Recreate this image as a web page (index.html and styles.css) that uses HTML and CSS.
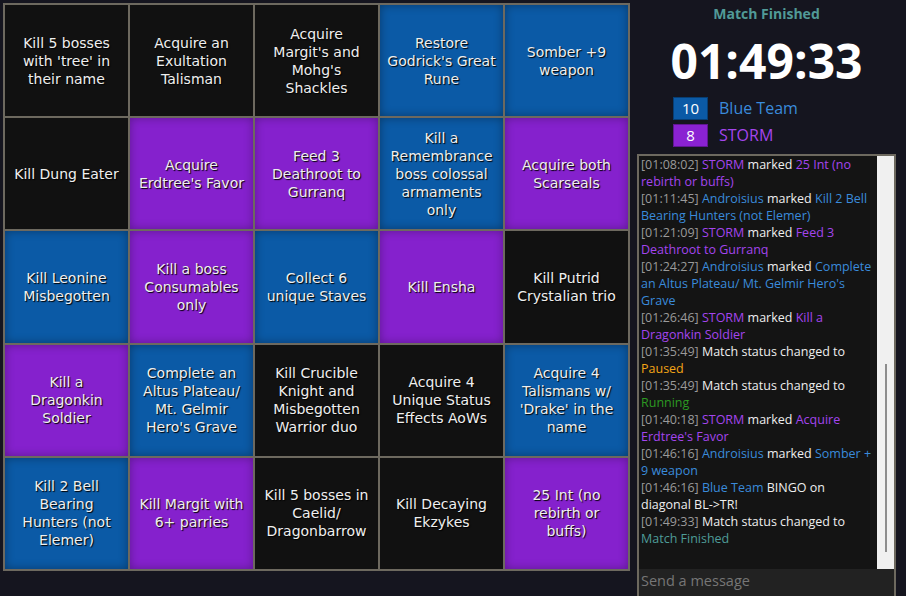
FILE: index.html
```html
<!DOCTYPE html>
<html>
<head>
<meta charset="utf-8">
<link rel="stylesheet" href="styles.css">
</head>
<body>
<div class="app">
  <div class="board">
    <div class="cell c-none">Kill 5 bosses<br>with 'tree' in<br>their name</div>
    <div class="cell c-none">Acquire an<br>Exultation<br>Talisman</div>
    <div class="cell c-none">Acquire<br>Margit's and<br>Mohg's<br>Shackles</div>
    <div class="cell c-blue">Restore<br>Godrick's Great<br>Rune</div>
    <div class="cell c-blue">Somber +9<br>weapon</div>

    <div class="cell c-none">Kill Dung Eater</div>
    <div class="cell c-purple">Acquire<br>Erdtree's Favor</div>
    <div class="cell c-purple">Feed 3<br>Deathroot to<br>Gurranq</div>
    <div class="cell c-blue">Kill a<br>Remembrance<br>boss colossal<br>armaments<br>only</div>
    <div class="cell c-purple">Acquire both<br>Scarseals</div>

    <div class="cell c-blue">Kill Leonine<br>Misbegotten</div>
    <div class="cell c-purple">Kill a boss<br>Consumables<br>only</div>
    <div class="cell c-blue">Collect 6<br>unique Staves</div>
    <div class="cell c-purple">Kill Ensha</div>
    <div class="cell c-none">Kill Putrid<br>Crystalian trio</div>

    <div class="cell c-purple">Kill a<br>Dragonkin<br>Soldier</div>
    <div class="cell c-blue">Complete an<br>Altus Plateau/<br>Mt. Gelmir<br>Hero's Grave</div>
    <div class="cell c-none">Kill Crucible<br>Knight and<br>Misbegotten<br>Warrior duo</div>
    <div class="cell c-none">Acquire 4<br>Unique Status<br>Effects AoWs</div>
    <div class="cell c-blue">Acquire 4<br>Talismans w/<br>'Drake' in the<br>name</div>

    <div class="cell c-blue">Kill 2 Bell<br>Bearing<br>Hunters (not<br>Elemer)</div>
    <div class="cell c-purple">Kill Margit with<br>6+ parries</div>
    <div class="cell c-none">Kill 5 bosses in<br>Caelid/<br>Dragonbarrow</div>
    <div class="cell c-none">Kill Decaying<br>Ekzykes</div>
    <div class="cell c-purple">25 Int (no<br>rebirth or<br>buffs)</div>
  </div>

  <aside class="side">
    <div class="status">Match Finished</div>
    <div class="timer">01:49:33</div>
    <div class="teams">
      <div class="team"><span class="score score-blue">10</span><span class="tname t-blue">Blue Team</span></div>
      <div class="team"><span class="score score-purple">8</span><span class="tname t-purple">STORM</span></div>
    </div>
    <div class="chat">
      <div class="log-area">
        <div class="log">
          <div class="msg"><span class="ts">[01:08:02]</span> <span class="t-purple">STORM</span> marked <span class="t-purple">25 Int (no<br>rebirth or buffs)</span></div>
          <div class="msg"><span class="ts">[01:11:45]</span> <span class="t-blue">Androisius</span> marked <span class="t-blue">Kill 2 Bell<br>Bearing Hunters (not Elemer)</span></div>
          <div class="msg"><span class="ts">[01:21:09]</span> <span class="t-purple">STORM</span> marked <span class="t-purple">Feed 3<br>Deathroot to Gurranq</span></div>
          <div class="msg"><span class="ts">[01:24:27]</span> <span class="t-blue">Androisius</span> marked <span class="t-blue">Complete<br>an Altus Plateau/ Mt. Gelmir Hero's<br>Grave</span></div>
          <div class="msg"><span class="ts">[01:26:46]</span> <span class="t-purple">STORM</span> marked <span class="t-purple">Kill a<br>Dragonkin Soldier</span></div>
          <div class="msg"><span class="ts">[01:35:49]</span> Match status changed to<br><span class="t-paused">Paused</span></div>
          <div class="msg"><span class="ts">[01:35:49]</span> Match status changed to<br><span class="t-running">Running</span></div>
          <div class="msg"><span class="ts">[01:40:18]</span> <span class="t-purple">STORM</span> marked <span class="t-purple">Acquire<br>Erdtree's Favor</span></div>
          <div class="msg"><span class="ts">[01:46:16]</span> <span class="t-blue">Androisius</span> marked <span class="t-blue">Somber +<br>9 weapon</span></div>
          <div class="msg"><span class="ts">[01:46:16]</span> <span class="t-blue">Blue Team</span> BINGO on<br>diagonal BL-&gt;TR!</div>
          <div class="msg"><span class="ts">[01:49:33]</span> Match status changed to<br><span class="t-finished">Match Finished</span></div>
        </div>
        <div class="scroll"><div class="thumb"></div></div>
      </div>
      <div class="input">Send a message</div>
    </div>
  </aside>
</div>
</body>
</html>
```

FILE: styles.css
```css
* { box-sizing: border-box; }

html, body {
  margin: 0;
  height: 100%;
  overflow: hidden;
}

body {
  background: #15151f;
  font-family: "Open Sans", "Noto Sans", sans-serif;
  color: #eeeeee;
}

.app {
  display: flex;
  align-items: flex-start;
  padding: 3px 0 0 3px;
  height: 596px;
}

.board {
  flex: none;
  display: grid;
  grid-template-columns: repeat(5, 123px);
  grid-template-rows: repeat(5, 1fr);
  gap: 2px;
  padding: 2px;
  width: 627px;
  height: 568px;
  background: #6d695f;
}

.cell {
  display: flex;
  align-items: center;
  justify-content: center;
  text-align: center;
  padding: 0 3px;
  font-family: "DejaVu Sans", "Verdana", sans-serif;
  font-size: 14px;
  line-height: 18px;
  color: #efefef;
  text-shadow: 1px 1px 1px #000;
}

.c-none { background: #111111; }
.c-blue {
  background: #0b5aa6;
  box-shadow: inset 0 0 10px rgba(0, 0, 0, 0.35);
}
.c-purple {
  background: #8521cd;
  box-shadow: inset 0 0 10px rgba(0, 0, 0, 0.3);
}

.side {
  flex: none;
  width: 276px;
  padding: 0 10px 0 7px;
  display: flex;
  flex-direction: column;
}

.status {
  margin-top: 1px;
  text-align: center;
  font-weight: 700;
  font-size: 14px;
  line-height: 19px;
  color: #519a97;
}

.timer {
  margin-top: 10px;
  text-align: center;
  font-weight: 700;
  font-size: 48px;
  line-height: 56px;
  color: #ffffff;
}

.teams {
  margin-top: 8px;
  padding-left: 36px;
  display: flex;
  flex-direction: column;
  gap: 3.5px;
}

.team {
  display: flex;
  align-items: center;
  height: 23px;
}

.score {
  width: 35px;
  height: 23px;
  border: 1px solid rgba(0, 0, 0, 0.3);
  text-align: center;
  font-size: 15px;
  line-height: 21px;
  color: #ffffff;
}
.score-blue { background: #0b5aa6; }
.score-purple { background: #8a22d2; }

.tname {
  margin-left: 11px;
  font-size: 16px;
  line-height: 23px;
}

.t-blue { color: #3a8bdb; }
.t-purple { color: #a445ee; }
.t-paused { color: #f2a516; }
.t-running { color: #2c9a22; }
.t-finished { color: #4e9c98; }

.chat {
  flex: none;
  margin-top: 7px;
  width: 259px;
  height: 445px;
  border: 2px solid #6d695f;
  background: #141414;
  display: flex;
  flex-direction: column;
}

.log-area {
  flex: 1;
  min-height: 0;
  display: flex;
}

.log {
  flex: 1;
  min-width: 0;
  padding: 0 2px;
  font-size: 12.5px;
  line-height: 17px;
  color: #eeeeee;
  overflow: hidden;
}

.ts { color: #9a9a9a; }

.scroll {
  flex: none;
  width: 17px;
  background: #f0f0f0;
  display: flex;
  justify-content: center;
}

.thumb {
  width: 2px;
  margin-top: 208px;
  height: 188px;
  background: #8c8c8c;
}

.input {
  flex: none;
  height: 28px;
  background: #222222;
  padding: 0 2px;
  font-size: 14.5px;
  line-height: 24px;
  color: #767676;
}
```
